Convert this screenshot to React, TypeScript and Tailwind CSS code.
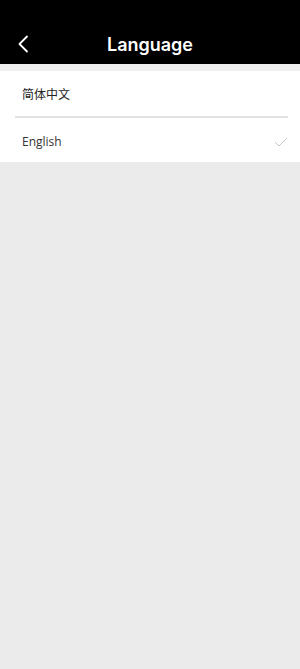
import React from "react";

export default function App() {
  return (
    <div className="w-[300px] h-[669px] bg-[#ebebeb] flex flex-col" style={{ fontFamily: '"Open Sans", "Noto Sans CJK SC", sans-serif' }}>
      <div className="h-[64px] bg-black relative flex items-end justify-center pb-[8px] shrink-0">
        <svg className="absolute left-[17px] top-[35px]" width="12" height="18" viewBox="0 0 12 18" fill="none">
          <path d="M10 1.5 L2.5 9 L10 16.5" stroke="white" strokeWidth="1.8" strokeLinecap="round" strokeLinejoin="round" />
        </svg>
        <span className="text-white text-[18px] font-semibold leading-[22px]" style={{ fontFamily: 'Inter, "Liberation Sans", sans-serif' }}>Language</span>
      </div>
      <div className="h-[7px] bg-[#efefef] shrink-0" />
      <div className="bg-white flex flex-col">
        <div className="h-[45px] flex items-center pl-[22px] pt-[3px] text-[12px] text-[#222]">简体中文</div>
        <div className="mx-[15px] mr-[12px] h-[2px] bg-[#e2e2e2]" />
        <div className="h-[44px] flex items-center justify-between pl-[22px] pr-[12px] pt-[3px] text-[12px] text-[#333]">
          <span>English</span>
          <svg width="14" height="10" viewBox="0 0 14 10" fill="none">
            <path d="M1 5 L5 9 L13 1" stroke="#c8c8c8" strokeWidth="1" />
          </svg>
        </div>
      </div>
    </div>
  );
}
